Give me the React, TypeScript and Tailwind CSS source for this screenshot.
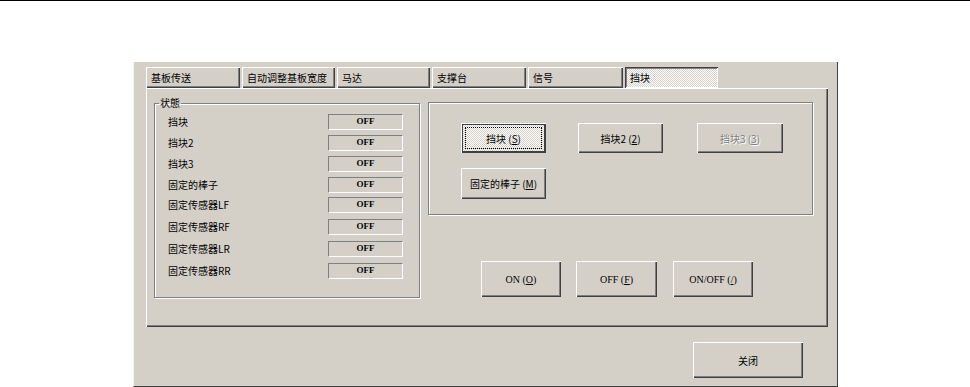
const raised =
  "shadow-[inset_1px_1px_0_#ffffff,inset_-1px_-1px_0_#404040,inset_-2px_-2px_0_#808080]";
const sunkenTab =
  "shadow-[inset_1px_1px_0_#404040,inset_-1px_-1px_0_#ffffff,inset_2px_2px_0_#808080]";
const checker =
  "bg-[image:repeating-conic-gradient(#ffffff_0_25%,#d4d0c8_0_50%)] bg-[length:2px_2px]";
const etched = "border border-[#808080] shadow-[inset_1px_1px_0_#ffffff,1px_1px_0_#ffffff]";
const serif = "font-['Liberation_Serif',serif]";

const tabs = [
  { label: "基板传送", w: "w-[94px]" },
  { label: "自动调整基板宽度", w: "w-[93px]" },
  { label: "马达", w: "w-[93px]" },
  { label: "支撑台", w: "w-[94px]" },
  { label: "信号", w: "w-[95px]" },
  { label: "挡块", w: "w-[93px]", active: true },
];

// spacing above each row, in px, read off the screenshot
const rows = [
  { label: "挡块", mt: "" },
  { label: "挡块2", mt: "mt-[5px]" },
  { label: "挡块3", mt: "mt-[5px]" },
  { label: "固定的棒子", mt: "mt-[5px]" },
  { label: "固定传感器LF", mt: "mt-[4px]" },
  { label: "固定传感器RF", mt: "mt-[6px]" },
  { label: "固定传感器LR", mt: "mt-[6px]" },
  { label: "固定传感器RR", mt: "mt-[6px]" },
];

function Btn({
  children,
  className = "",
  disabled = false,
}: {
  children: React.ReactNode;
  className?: string;
  disabled?: boolean;
}) {
  return (
    <button
      type="button"
      className={`flex items-center justify-center bg-[#d4d0c8] text-[10px] ${raised} ${
        disabled ? "text-[#808080] [text-shadow:1px_1px_0_#ffffff]" : "text-black"
      } ${className}`}
    >
      {children}
    </button>
  );
}

function StatusRow({ label, mt }: { label: string; mt: string }) {
  return (
    <div className={`flex h-[16px] items-center ${mt}`}>
      <span className="w-[173px] pl-[13px] text-[10px] leading-none text-black">{label}</span>
      <span
        className={`flex h-[16px] w-[75px] justify-center border border-t-[#808080] border-l-[#808080] border-r-white border-b-white pt-[1px] text-[9px] font-bold leading-[10px] text-black ${serif}`}
      >
        OFF
      </span>
    </div>
  );
}

export default function App() {
  return (
    <div className="h-[387px] w-[970px] overflow-hidden border-t border-black bg-white font-['Noto_Sans_CJK_SC',sans-serif]">
      <div className="ml-[133px] mt-[61px] h-[325px] w-[705px] border-l border-r border-b border-l-[#f4f4f4] border-r-[#404040] border-b-[#404040] bg-[#d4d0c8] pl-[12px] pt-[5px]">
        <div className="flex h-[21px] gap-[2px]">
          {tabs.map((t) => (
            <div
              key={t.label}
              className={`flex h-[21px] items-center pl-[5px] text-[10px] text-black ${t.w} ${
                t.active ? `${sunkenTab} ${checker}` : raised
              }`}
            >
              {t.label}
            </div>
          ))}
        </div>

        <div className={`flex h-[239px] w-[682px] pl-[8px] ${raised}`}>
          <fieldset className={`mt-[8px] h-[202px] w-[266px] px-0 pt-[4px] ${etched}`}>
            <legend className="ml-[4px] px-[1px] text-[10px] leading-[14px] text-black">状態</legend>
            <div className="flex flex-col">
              {rows.map((r) => (
                <StatusRow key={r.label} label={r.label} mt={r.mt} />
              ))}
            </div>
          </fieldset>

          <div className="ml-[8px] flex flex-col">
            <div className={`mt-[14px] h-[113px] w-[385px] pl-[32px] pt-[20px] ${etched}`}>
              <div className="flex">
                <button
                  type="button"
                  className={`h-[30px] w-[85px] p-[4px] text-[10px] text-black ${checker} shadow-[inset_1px_1px_0_#ffffff,inset_-1px_-1px_0_#404040,inset_0_0_0_2px_#404040]`}
                >
                  <span className="flex h-full w-full items-center justify-center border border-dotted border-black">
                    挡块 (<span className="underline">S</span>)
                  </span>
                </button>
                <Btn className="ml-[32px] h-[30px] w-[85px]">
                  挡块2 (<span className="underline">2</span>)
                </Btn>
                <Btn className="ml-[34px] h-[30px] w-[86px]" disabled>
                  挡块3 (<span className="underline">3</span>)
                </Btn>
              </div>
              <Btn className="mt-[15px] h-[31px] w-[85px]">
                固定的棒子 (<span className="underline">M</span>)
              </Btn>
            </div>

            <div className={`ml-[53px] mt-[46px] flex gap-[15px] ${serif}`}>
              <Btn className="h-[36px] w-[80px]">
                ON (<span className="underline">O</span>)
              </Btn>
              <Btn className="h-[36px] w-[81px]">
                OFF (<span className="underline">F</span>)
              </Btn>
              <Btn className="ml-[1px] h-[36px] w-[80px]">
                ON/OFF (<span className="underline">/</span>)
              </Btn>
            </div>
          </div>
        </div>

        <div className="flex w-[682px] justify-end pr-[25px] pt-[15px]">
          <Btn className="h-[36px] w-[110px]">关闭</Btn>
        </div>
      </div>
    </div>
  );
}
